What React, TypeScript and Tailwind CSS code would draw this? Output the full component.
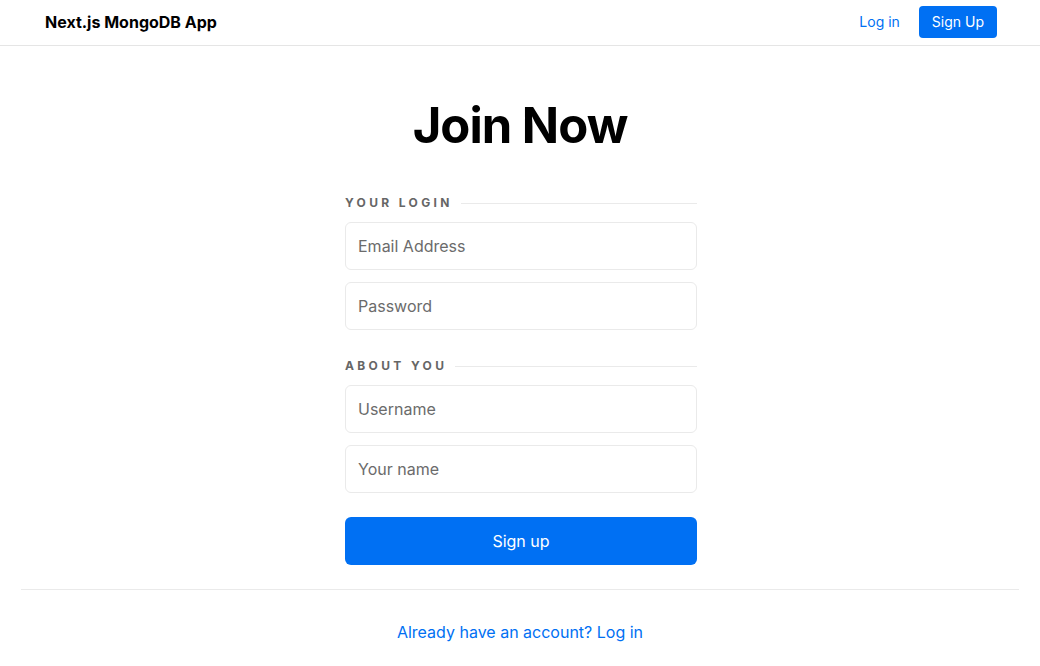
import React from 'react'

const font = { fontFamily: 'Inter, "Liberation Sans", sans-serif' }

function SectionLabel({ text }: { text: string }) {
  return (
    <div className="flex items-center gap-[8px] h-[12px]">
      <span className="text-[12px] font-bold uppercase tracking-[0.28em] text-[#666]">{text}</span>
      <div className="flex-1 h-px bg-[#eaeaea]" />
    </div>
  )
}

function Field({ placeholder, type = 'text' }: { placeholder: string; type?: string }) {
  return (
    <input
      type={type}
      placeholder={placeholder}
      className="w-full h-[48px] rounded-[6px] border border-[#eaeaea] px-[12px] text-[16px] text-[#111] placeholder:text-[#6b6b6b] outline-none"
    />
  )
}

export default function App() {
  return (
    <div style={font} className="min-h-[666px] bg-white text-black">
      <header className="h-[46px] border-b border-[#e5e5e5] flex items-center justify-between pl-[45px] pr-[43px] pb-[2px]">
        <span className="text-[16px] font-bold">Next.js MongoDB App</span>
        <nav className="flex items-center gap-[19px]">
          <a className="text-[14px] text-[#0070f3]">Log in</a>
          <button className="h-[32px] px-[13px] rounded-[4px] bg-[#0070f3] text-white text-[14px]">Sign Up</button>
        </nav>
      </header>

      <main className="px-[21px]">
        <h1 className="text-center text-[49px] font-bold tracking-[-0.02em] leading-none pt-[55px] pb-[47px]">Join Now</h1>

        <form className="w-[352px] mx-auto flex flex-col translate-x-[1px]">
          <SectionLabel text="Your Login" />
          <div className="flex flex-col gap-[12px] mt-[13px]">
            <Field placeholder="Email Address" type="email" />
            <Field placeholder="Password" type="password" />
          </div>
          <div className="mt-[30px]">
            <SectionLabel text="About You" />
          </div>
          <div className="flex flex-col gap-[12px] mt-[13px]">
            <Field placeholder="Username" />
            <Field placeholder="Your name" />
          </div>
          <button type="button" className="mt-[24px] h-[48px] rounded-[6px] bg-[#0070f3] text-white text-[16px]">
            Sign up
          </button>
        </form>

        <div className="mt-[24px] h-px bg-[#eaeaea]" />

        <p className="text-center mt-[30px]">
          <a className="text-[16px] text-[#0070f3]">Already have an account? Log in</a>
        </p>
      </main>
    </div>
  )
}
